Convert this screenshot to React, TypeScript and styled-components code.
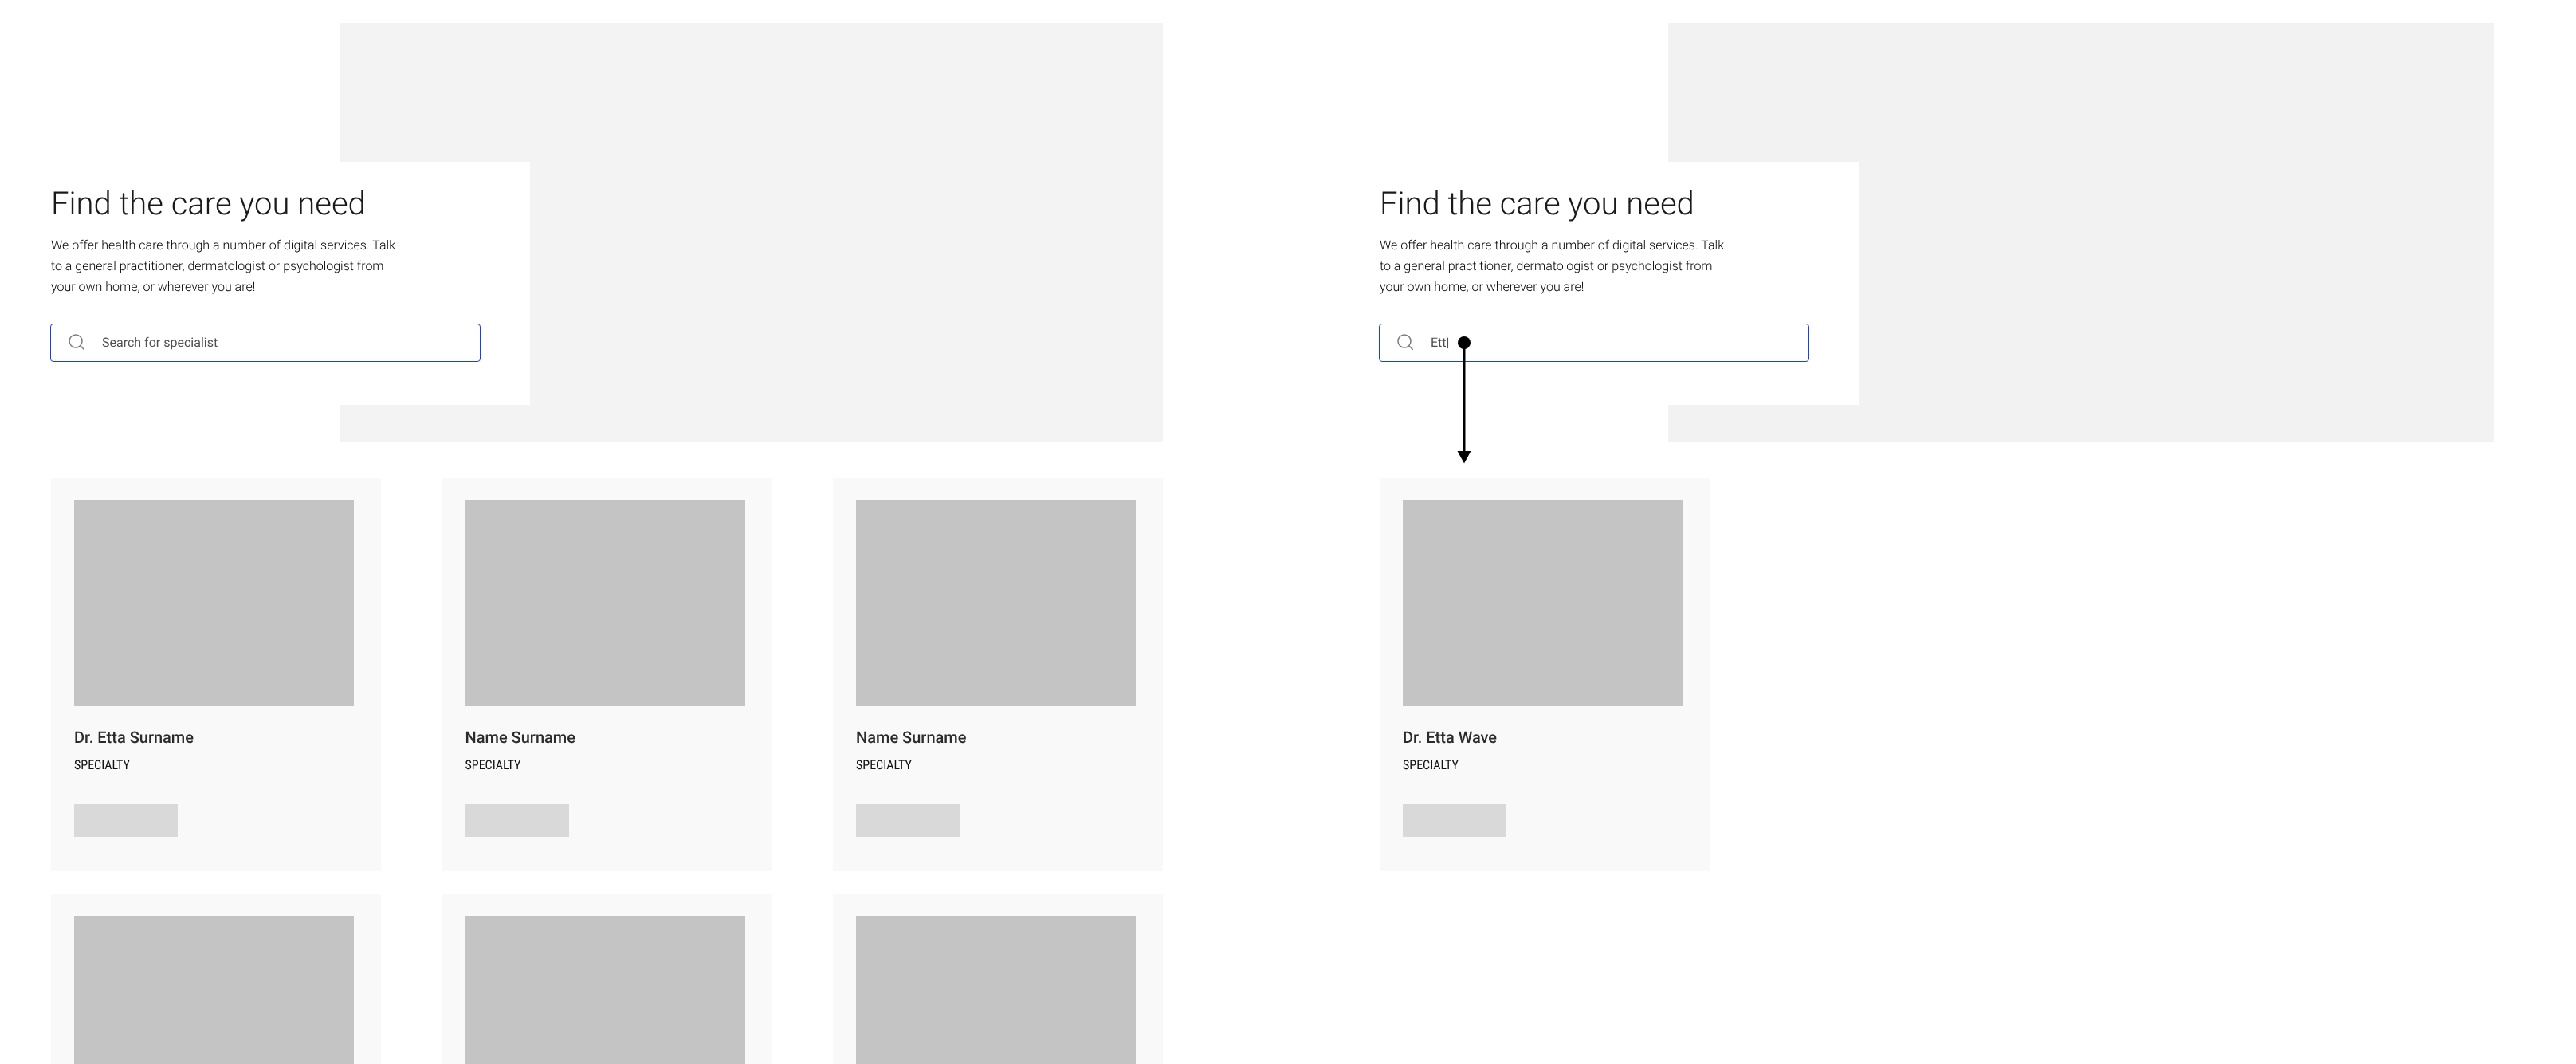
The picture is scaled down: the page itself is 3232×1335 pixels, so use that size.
import { createGlobalStyle, styled } from "styled-components";

const GlobalStyle = createGlobalStyle`
  html, body {
    margin: 0;
    padding: 0;
    background: #fff;
    font-family: Roboto, "Liberation Sans", sans-serif;
    color: #1a1a1a;
    text-rendering: geometricPrecision;
  }
`;

const Page = styled.div`
  display: flex;
  height: 1335px;
  overflow: hidden;
  padding: 29px 0 0 64px;
  box-sizing: border-box;
  gap: 272px;
  will-change: transform;
`;

const Frame = styled.section<{ $width: number }>`
  position: relative;
  width: ${(p) => p.$width}px;
  flex: none;
`;

const HeroBackdrop = styled.div<{ $tone: string }>`
  margin-left: 362px;
  height: 525px;
  padding-top: 174px;
  box-sizing: border-box;
  background: ${(p) => p.$tone};
`;

const HeroPanel = styled.div`
  margin-left: -362px;
  width: 601px;
  height: 305px;
  box-sizing: border-box;
  padding-top: 28px;
  background: #fff;
`;

const Title = styled.h1`
  margin: 0;
  font-size: 40px;
  line-height: 50px;
  font-weight: 300;
`;

const Intro = styled.p`
  margin: 14px 0 0;
  width: 440px;
  font-size: 16px;
  line-height: 26px;
  font-weight: 300;
  color: #000;
`;

const SearchBox = styled.div`
  display: flex;
  align-items: center;
  width: 540px;
  height: 48px;
  margin: 33px 0 0 -1px;
  padding: 0 0 2px 22px;
  box-sizing: border-box;
  gap: 22px;
  border: 1px solid #1a3fe6;
  border-radius: 4px;
  background: #fff;
`;

const SearchText = styled.span`
  font-size: 16px;
  color: #4f4f4f;
`;

const CardGrid = styled.div`
  display: grid;
  grid-template-columns: repeat(3, 414px);
  column-gap: 76.5px;
  row-gap: 29px;
  margin-top: 46px;
`;

const Card = styled.article`
  height: 493px;
  padding: 27px 29px 0;
  box-sizing: border-box;
  background: #f9f9f9;
`;

const Photo = styled.div`
  width: 351px;
  height: 259px;
  background: #c4c4c4;
`;

const Name = styled.h2`
  margin: 27px 0 0;
  font-size: 20px;
  line-height: 24px;
  font-weight: 500;
  color: #2b2b2b;
`;

const Specialty = styled.div`
  margin-top: 13px;
  font-size: 16px;
  line-height: 20px;
  font-stretch: condensed;
  color: #111;
`;

const CardAction = styled.div`
  width: 130px;
  height: 41px;
  margin-top: 39px;
  background: #d9d9d9;
`;

const FlowArrow = styled.svg`
  position: absolute;
  left: 96px;
  top: 392px;
`;

const SearchIcon = () => (
  <svg width="20" height="20" viewBox="0 0 20 20" fill="none" stroke="#7a7a7a" strokeWidth="1.5">
    <circle cx="9" cy="9" r="8" />
    <path d="M14.800 14.800L20 20" />
  </svg>
);

type Doctor = { id: number; name: string };

const DoctorCard = ({ name }: { name?: string }) => (
  <Card>
    <Photo />
    <Name>{name}</Name>
    <Specialty>SPECIALTY</Specialty>
    <CardAction />
  </Card>
);

const Hero = ({ query, tone }: { query: string; tone: string }) => (
  <HeroBackdrop $tone={tone}>
    <HeroPanel>
      <Title>Find the care you need</Title>
      <Intro>
        We offer health care through a number of digital services. Talk to a general practitioner,
        dermatologist or psychologist from your own home, or wherever you are!
      </Intro>
      <SearchBox>
        <SearchIcon />
        <SearchText>{query}</SearchText>
      </SearchBox>
    </HeroPanel>
  </HeroBackdrop>
);

const allDoctors: Doctor[] = [
  { id: 1, name: "Dr. Etta Surname" },
  { id: 2, name: "Name Surname" },
  { id: 3, name: "Name Surname" },
  { id: 4, name: "Name Surname" },
  { id: 5, name: "Name Surname" },
  { id: 6, name: "Name Surname" },
];

export default function App() {
  return (
    <>
      <GlobalStyle />
      <Page>
        <Frame $width={1395}>
          <Hero query="Search for specialist" tone="#f3f3f3" />
          <CardGrid>
            {allDoctors.map((d) => (
              <DoctorCard key={d.id} name={d.name} />
            ))}
          </CardGrid>
        </Frame>
        <Frame $width={1398}>
          <Hero query="Ett|" tone="#f2f2f2" />
          <CardGrid>
            <DoctorCard name="Dr. Etta Wave" />
          </CardGrid>
          <FlowArrow width="20" height="170" viewBox="0 0 20 170">
            <circle cx="10" cy="9" r="8" fill="#000" />
            <path d="M10 9V155" stroke="#000" strokeWidth="3" />
            <path d="M1.500 145H18.500L10 160.500Z" fill="#000" />
          </FlowArrow>
        </Frame>
      </Page>
    </>
  );
}
